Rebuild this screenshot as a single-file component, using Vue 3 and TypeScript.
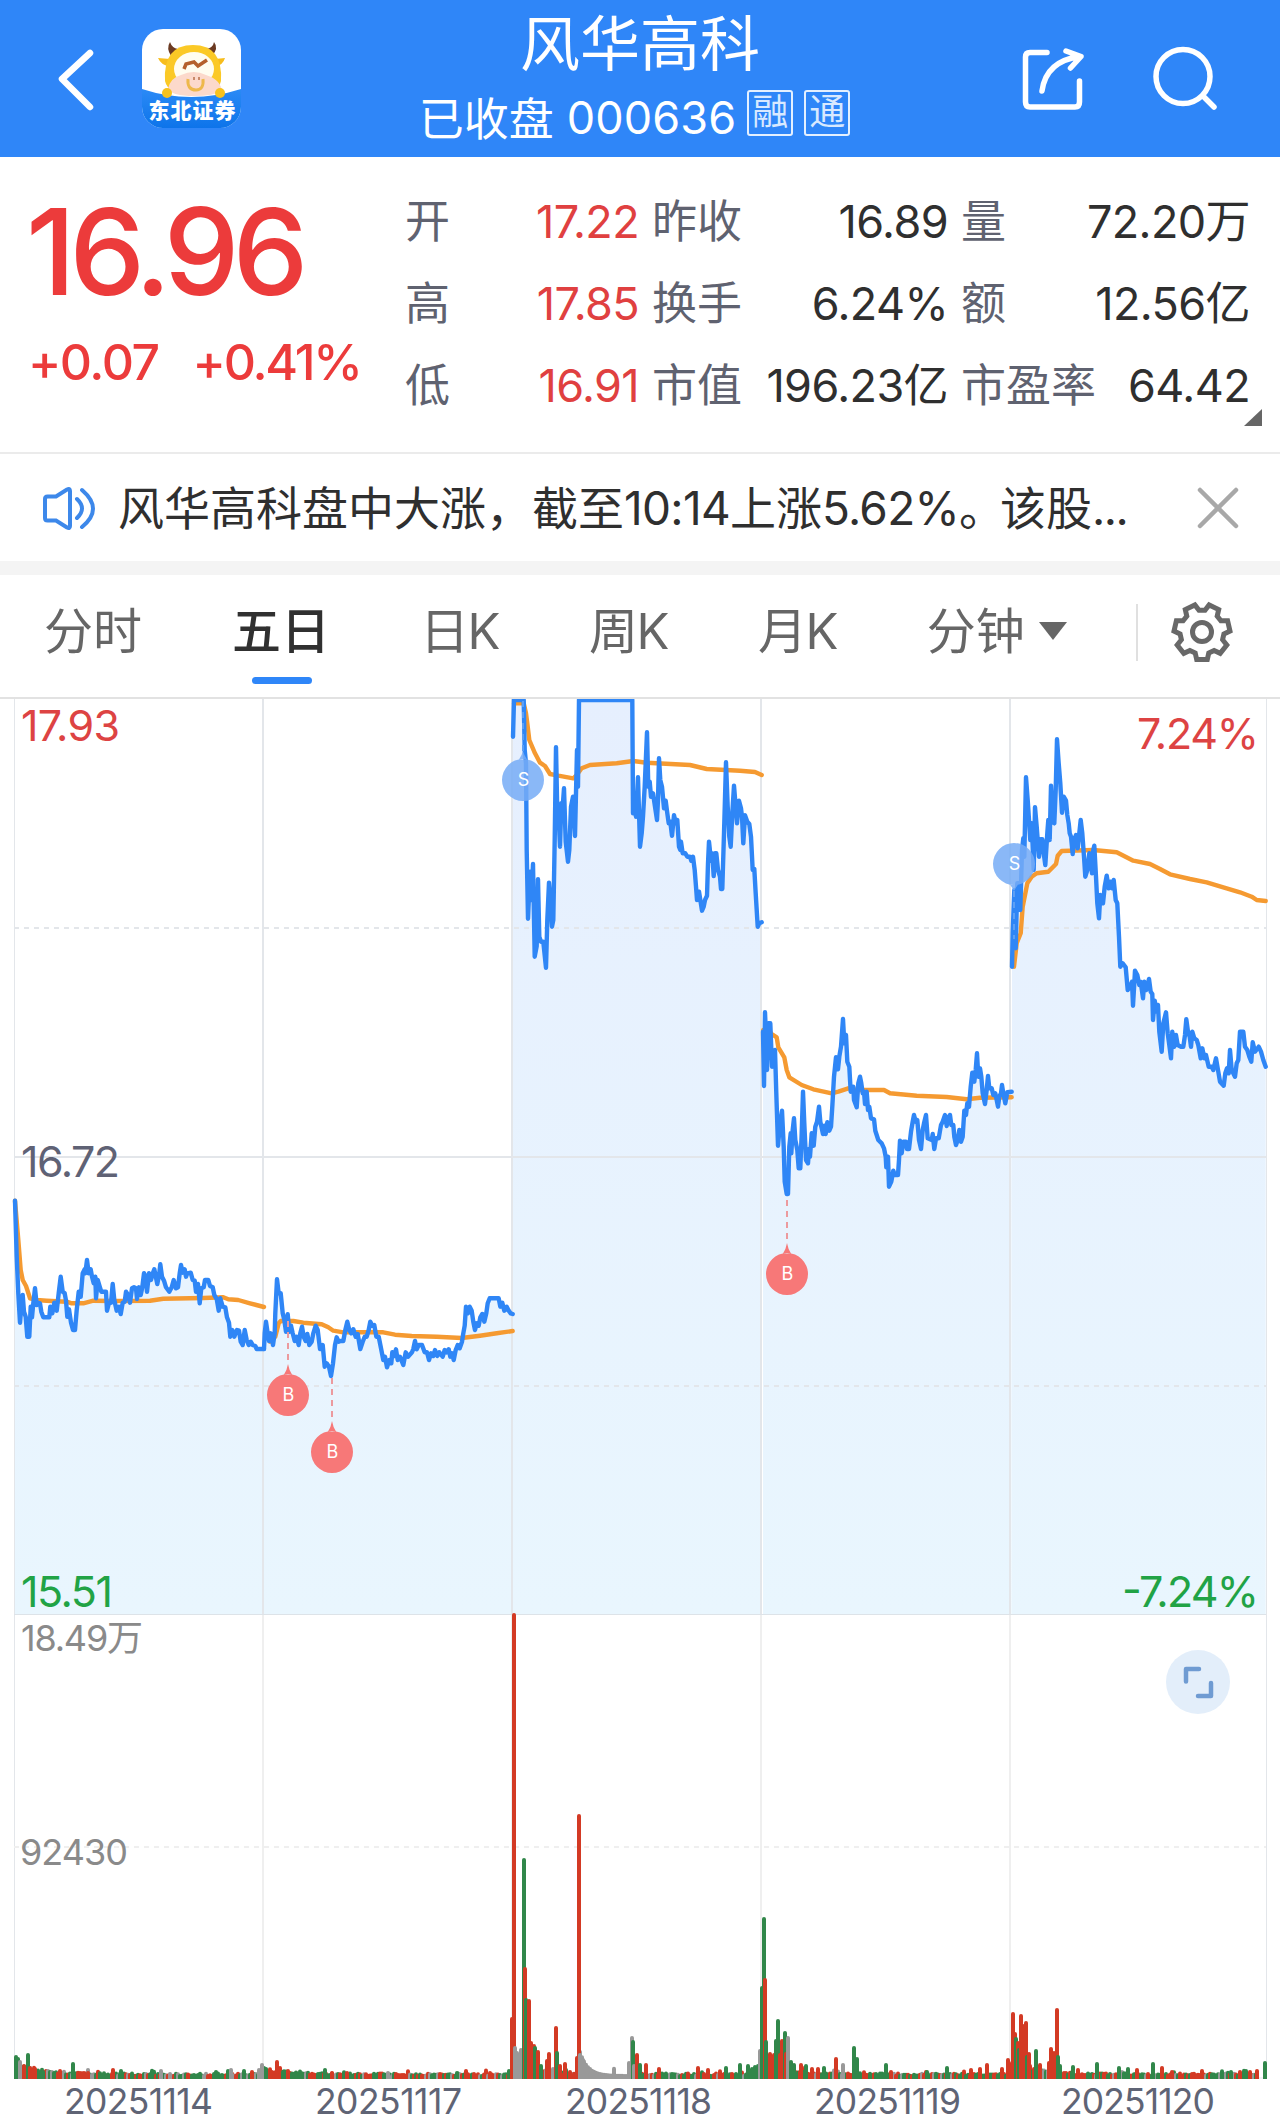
<template>
    <div class="stock_page">

        <header class="top_bar">
            <div class="top_left">
                <svg class="back" width="40" height="66" viewBox="0 0 40 66">
                    <path d="M34 7 L6 33 L34 61" />
                </svg>
                <svg class="logo" width="99" height="99" viewBox="0 0 99 99">
                    <defs>
                        <clipPath id="logoClip"><rect width="99" height="99" rx="21" /></clipPath>
                        <linearGradient id="logoBlue" x1="0" y1="0" x2="0" y2="1">
                            <stop offset="0" stop-color="#2b8af6" />
                            <stop offset="1" stop-color="#0d74ea" />
                        </linearGradient>
                    </defs>
                    <g clip-path="url(#logoClip)">
                        <rect width="99" height="99" fill="#fff" />
                        <path d="M0 60 Q49 76 99 60 V99 H0Z" fill="url(#logoBlue)" />
                        <path d="M29 27 Q24 19 28 13 Q30 19 36 20Z M70 27 Q77 19 72 13 Q71 19 64 20Z" fill="#6b3a22" />
                        <path d="M28 30 L16 29 Q19 36 27 37Z M73 30 L83 29 Q81 36 74 37Z" fill="#f7bd1c" />
                        <path d="M23 52 Q21 16 51 16 Q81 16 79 52 Q76 66 51 66 Q26 66 23 52Z" fill="#fbc926" />
                        <ellipse cx="52" cy="40" rx="20" ry="17" fill="#fffdf0" />
                        <path d="M26 60 Q28 49 39 46 Q52 40 64 46 Q78 50 80 62 Q72 67 52 67 Q30 67 26 60Z" fill="#fcd9cb" />
                        <path d="M42 40 L44 35 L52 33 L56 37 L65 31" class="trend" />
                        <path d="M46 50 Q45 61 54 61 Q62 61 61 50" class="ring" />
                        <path d="M52 48v3M57 48v3" class="nostril" />
                        <circle cx="25" cy="64" r="5" fill="#f7c21e" />
                        <circle cx="78" cy="64" r="5" fill="#f7c21e" />
                        <text x="6.500" y="89" textLength="87" class="logo_text">东北证券</text>
                    </g>
                </svg>
            </div>
            <div class="top_title">
                <h1>风华高科</h1>
                <div class="sub_title">
                    <span>已收盘</span>
                    <span class="code">000636</span>
                    <span class="tag">融</span>
                    <span class="tag second">通</span>
                </div>
            </div>
            <div class="top_right">
                <svg width="70" height="70" viewBox="1017 45 70 70" class="line_icon">
                    <path d="M1047 52.500 H1030 Q1025.500 52.500 1025.500 57 V102 Q1025.500 107 1030 107 H1075 Q1079.500 107 1079.500 102 V81" />
                    <path d="M1042 91 Q1046 61 1080 56.500 M1066 51 L1081 56.500 L1070.500 68" />
                </svg>
                <svg width="70" height="70" viewBox="1150 45 70 70" class="line_icon">
                    <circle cx="1183" cy="76.500" r="27" />
                    <path d="M1203 96 L1214 107" />
                </svg>
            </div>
        </header>

        <section class="quote">
            <div class="price_box">
                <div class="price">16.96</div>
                <div class="change">
                    <span>+0.07</span>
                    <span class="percent">+0.41%</span>
                </div>
            </div>
            <div class="stats">
                <div v-for="item in stats" :key="item.label" class="stat">
                    <span class="label">{{ item.label }}</span>
                    <span class="value" :class="{ up: item.up }">{{ item.value }}</span>
                </div>
            </div>
            <i class="corner"></i>
        </section>

        <section class="news">
            <svg width="56" height="46" viewBox="41 484 56 46" class="speaker">
                <path d="M45 498 Q45 495.500 47.500 495.500 H56 L67 488.500 Q70 487 70 490 V525 Q70 528 67 526.500 L56 519.500 H47.500 Q45 519.500 45 517Z" />
                <path d="M77 498 Q87 507.500 77 517 M82 489 Q104 508 82 526" />
            </svg>
            <p>风华高科盘中大涨，截至<span class="num">10:14</span>上涨<span class="num">5.62%</span><span class="stop">。</span>该股<span class="dots">...</span></p>
            <svg width="42" height="42" viewBox="0 0 42 42" class="close">
                <path d="M3 3 L39 39 M39 3 L3 39" />
            </svg>
        </section>

        <nav class="tabs">
            <a v-for="tab in tabs" :key="tab" :class="{ active: tab === current, k: tab.endsWith('K') }" @click="current = tab">
                {{ tab }}<i v-if="tab === '分钟'" class="caret"></i>
            </a>
            <div class="settings">
                <svg width="64" height="64" viewBox="-32 -32 64 64">
                    <path :d="gear" />
                    <circle r="9.500" />
                </svg>
            </div>
        </nav>

        <svg class="chart" width="1280" height="1425" viewBox="0 0 1280 1425">
            <defs>
                <linearGradient id="area" gradientUnits="userSpaceOnUse" x1="0" y1="0" x2="0" y2="915">
                    <stop offset="0" stop-color="#e6effe" />
                    <stop offset="1" stop-color="#e9f6fe" />
                </linearGradient>
            </defs>

            <path v-for="(s, i) in sessions" :key="'a' + i" :d="areaPath(s)" fill="url(#area)" />

            <g class="grid">
                <path d="M14.500 0V1380M1266.500 0V1380" class="thin" />
                <path d="M263 0V915M512 0V915M761 0V915M1010 0V915" />
                <path d="M263 915V1380M512 915V1380M761 915V1380M1010 915V1380" class="pale" />
                <path d="M14 458H1266" />
                <path d="M14 915.500H1266" class="thin base" />
                <path d="M14 229H1266M14 687H1266" class="dash" />
                <path d="M14 1148H1266" class="dash pale" />
                <path d="M14 1379H1266" class="thin" />
            </g>

            <polyline v-for="(s, i) in sessions" :key="'v' + i" :points="points(s, s.avg)" class="avg_line" />
            <polyline v-for="(s, i) in sessions" :key="'p' + i" :points="points(s, s.price)" class="price_line" />

            <path v-for="(b, i) in bars" :key="'b' + i" :d="`M${b.x} 1380V${1382 - b.h}`" class="bar" :class="b.c" />
            <rect x="0" y="1380" width="1280" height="4" fill="#fff" />

            <g v-for="m in markers" :key="m.x" class="marker" :class="m.type">
                <path :d="`M${m.x} ${m.from}V${m.to}`" class="guide" />
                <path :d="pinPath(m)" class="pin" />
                <text :x="m.x + .5" :y="m.y + 6">{{ m.type }}</text>
            </g>

            <text x="21" y="41.500" textLength="99" class="axis red">17.93</text>
            <text x="1137" y="50" textLength="122" class="axis red">7.24%</text>
            <text x="21" y="477.500" textLength="99" class="axis slate">16.72</text>
            <text x="21" y="908" textLength="92" class="axis green">15.51</text>
            <text x="1122" y="908" textLength="137" class="axis green">-7.24%</text>
            <text x="21" y="951.500" textLength="122" class="vol">18.49万</text>
            <text x="20" y="1166" textLength="108" class="vol">92430</text>
            <text v-for="d in dates" :key="d.text" :x="d.x" y="1415" :textLength="d.w" class="date">{{ d.text }}</text>

            <g class="expand">
                <circle cx="1198" cy="983" r="32" />
                <path d="M1186 982.500V970H1199M1198 997H1211V984" />
            </g>
        </svg>

    </div>
</template>

<script setup lang="ts">
import { ref } from 'vue';

interface Session {
    x: number;
    y: number;
    price: string;
    avg: string;
}
interface Bar {
    x: number;
    h: number;
    c: string;
}
interface Marker {
    type: 'B' | 'S';
    x: number;
    y: number;
    from: number;
    to: number;
    tip: number;
}

const tabs = ['分时', '五日', '日K', '周K', '月K', '分钟'];
const current = ref('五日');

const stats = [
    { label: '开', value: '17.22', up: true },
    { label: '昨收', value: '16.89' },
    { label: '量', value: '72.20万' },
    { label: '高', value: '17.85', up: true },
    { label: '换手', value: '6.24%' },
    { label: '额', value: '12.56亿' },
    { label: '低', value: '16.91', up: true },
    { label: '市值', value: '196.23亿' },
    { label: '市盈率', value: '64.42' },
];

const dates = [
    { text: '20251114', x: 64, w: 149 },
    { text: '20251117', x: 315, w: 147 },
    { text: '20251118', x: 565, w: 147 },
    { text: '20251119', x: 814, w: 147 },
    { text: '20251120', x: 1061, w: 154 },
];

// points are kept in thirds of a pixel, x / y is the origin of the session
const sessions: Session[] = [
    {
        x: 0, y: 481,
        price: '45,62 50,230 55,340 60,428 64,380 68,345 72,395 77,410 82,470 88,470 92,380 96,412 100,370 105,325 110,375 115,368 120,370 124,395 130,412 148,412 151,380 157,400 163,368 170,392 176,340 182,290 188,335 194,340 198,362 202,410 207,388 213,428 219,450 225,450 230,390 236,335 242,350 248,280 254,268 256,280 261,240 266,280 272,268 276,290 281,310 286,290 288,355 293,300 299,320 304,335 318,335 321,392 327,368 333,368 338,312 343,360 350,392 357,380 362,402 368,368 374,365 378,335 384,345 390,368 396,325 402,322 408,325 411,357 417,322 422,345 427,322 432,280 437,290 441,335 447,280 453,300 459,278 463,268 472,312 478,280 481,253 486,290 492,302 498,322 508,335 515,322 521,300 528,325 534,322 539,280 543,255 548,278 554,268 558,290 562,280 572,278 578,300 584,302 588,335 594,312 599,370 604,325 611,322 615,300 625,300 630,318 638,322 643,345 650,357 656,392 661,355 668,380 676,382 681,412 687,428 691,470 697,450 703,470 711,450 717,452 722,485 728,495 734,450 740,480 746,495 752,485 758,495 766,498 770,507 792,507',
        avg: '45,62 55,180 62,270 68,300 78,318 90,355 110,360 140,362 200,365 215,370 250,370 280,362 340,363 450,362 490,356 610,354 670,352 685,358 715,360 750,370 792,381',
    },
    {
        x: 0, y: 481,
        price: '792,507 794,460 798,425 803,460 807,483 812,460 819,495 824,460 826,400 831,298 836,340 842,340 848,400 853,420 858,455 863,403 868,455 873,437 878,460 884,483 890,470 896,495 901,460 906,440 911,470 917,483 922,462 928,495 935,485 940,460 947,437 953,450 960,507 968,495 974,560 980,550 987,560 993,588 999,550 1005,495 1010,472 1016,485 1022,483 1030,483 1036,450 1042,425 1048,450 1054,460 1060,448 1067,470 1073,462 1081,507 1088,485 1094,470 1100,470 1106,450 1111,425 1117,437 1123,435 1129,470 1136,470 1143,505 1150,540 1155,530 1161,562 1168,540 1174,550 1177,517 1183,528 1188,508 1193,540 1200,530 1210,555 1217,517 1224,530 1236,517 1240,507 1245,483 1250,508 1256,495 1266,495 1274,517 1281,517 1287,540 1293,520 1300,528 1305,510 1312,528 1318,517 1328,530 1334,510 1340,517 1346,508 1351,530 1356,520 1361,540 1367,510 1373,495 1379,505 1386,485 1390,460 1394,437 1398,380 1404,400 1409,380 1415,392 1420,425 1425,450 1430,430 1436,437 1441,412 1447,402 1453,425 1459,400 1463,370 1469,355 1496,355 1501,380 1507,368 1513,392 1520,380 1526,392 1532,400 1538,402',
        avg: '810,485 826,470 836,430 842,423 880,423 910,428 965,433 985,442 1000,452 1030,457 1150,457 1185,464 1235,468 1310,470 1385,474 1440,467 1490,460 1538,453',
    },
    {
        x: 490, y: -9,
        price: '69,140 72,30 101,30 104,180 108,220 110,480 114,686 120,545 124,630 129,522 134,800 140,768 144,568 148,740 153,755 160,755 168,833 172,690 177,578 182,640 186,710 190,690 194,450 198,172 202,370 206,380 210,470 214,340 218,350 222,295 227,455 234,515 238,480 243,350 249,320 255,438 261,180 264,290 267,30 427,30 429,370 434,350 438,380 444,262 450,470 455,430 459,380 464,290 471,127 475,290 479,275 483,320 489,310 495,350 501,390 504,330 507,205 511,270 516,290 522,355 527,332 532,370 536,400 541,395 546,437 552,376 557,400 562,390 567,470 571,480 573,455 578,490 586,490 592,500 600,500 604,512 609,500 614,540 618,590 621,630 627,605 636,662 641,650 645,630 651,617 654,520 657,455 663,512 667,490 671,558 675,490 679,490 684,540 690,560 693,597 697,597 702,430 708,217 713,350 718,440 722,470 727,370 732,287 737,350 741,400 747,332 753,355 756,380 760,460 765,376 772,395 778,402 783,440 788,540 793,537 797,610 803,710 808,700 815,697',
        avg: '72,40 101,40 108,70 112,100 118,150 135,190 150,218 165,228 180,252 205,257 250,265 260,255 275,235 300,225 380,220 430,213 470,218 600,225 650,237 750,242 795,246 815,255',
    },
    {
        x: 750, y: 261,
        price: '39,215 42,378 45,157 48,230 51,330 55,190 61,190 66,320 70,290 75,270 79,400 84,557 89,500 96,452 101,560 104,665 110,702 114,702 118,560 122,520 124,580 128,510 132,475 136,540 142,570 146,625 151,625 155,520 159,395 163,490 168,600 174,610 177,567 180,590 185,520 191,557 196,500 201,485 207,440 211,485 219,522 223,497 227,522 232,487 238,512 243,500 247,440 252,350 258,292 264,328 268,290 273,260 279,177 283,250 288,225 292,305 298,320 302,395 310,380 312,420 320,442 325,370 330,350 334,370 338,400 342,395 345,432 350,395 354,450 358,440 363,475 372,478 376,512 385,540 395,550 402,565 407,590 409,622 414,590 417,680 424,665 430,632 434,645 444,645 447,600 450,542 455,580 460,545 468,545 471,567 477,567 483,515 488,485 492,465 497,485 502,480 507,540 513,567 518,510 522,490 528,465 533,535 545,540 548,522 553,567 558,535 566,535 573,495 578,485 585,465 590,498 594,475 600,465 604,495 610,495 613,530 618,555 623,540 628,510 633,545 638,530 643,452 648,465 652,430 657,440 662,380 667,338 673,365 677,330 681,280 685,350 690,325 694,350 698,400 705,432 710,390 714,348 718,385 725,385 730,405 736,400 740,420 744,440 748,410 753,400 756,375 760,400 766,430 772,397 785,395',
        avg: '40,210 50,205 65,222 80,232 85,262 103,292 110,330 118,352 155,375 190,388 245,400 265,395 295,385 320,390 402,390 420,400 500,407 590,411 650,418 690,413 785,412',
    },
    {
        x: 990, y: -9,
        price: '66,830 68,730 73,600 77,775 82,580 86,580 91,660 96,480 100,445 103,500 108,262 113,330 117,390 121,450 125,400 131,540 135,352 140,410 147,500 152,448 157,448 161,490 166,525 172,430 175,390 179,450 183,287 188,395 193,400 197,300 201,148 206,220 211,280 216,368 221,320 228,332 232,375 236,400 239,430 243,440 248,492 252,450 258,435 263,475 268,430 272,390 277,430 282,500 286,560 292,540 298,490 303,520 306,550 310,480 313,467 318,560 322,640 327,685 331,615 339,640 344,590 350,557 356,595 361,575 366,595 371,570 377,630 382,640 387,740 391,830 398,820 407,832 413,900 420,890 426,875 429,947 433,880 435,842 442,855 448,885 452,875 459,925 463,875 469,900 477,867 482,905 487,912 489,990 494,932 500,965 504,945 508,1025 515,1085 520,1000 528,967 533,1030 538,1065 543,1105 547,1025 553,1070 558,1035 563,1065 573,1070 580,1070 585,1035 589,988 594,1025 599,1040 603,1070 607,1025 613,1045 620,1050 625,1065 632,1105 637,1075 643,1105 648,1095 656,1130 665,1130 670,1140 678,1105 684,1140 690,1175 701,1187 706,1150 711,1135 716,1150 720,1080 725,1140 735,1160 740,1120 745,1110 750,1025 760,1025 765,1070 772,1080 778,1100 784,1115 788,1057 795,1085 806,1070 813,1085 820,1110 827,1130',
        avg: '72,830 80,760 92,730 98,650 108,600 112,580 125,560 140,550 175,545 190,530 198,522 203,497 215,483 310,480 380,487 430,512 480,522 510,537 540,553 600,567 650,577 700,592 750,607 785,620 800,630 827,633',
    },
];

const scaled = (s: Session, list: string) => list.split(' ').map(p => {
    const [x, y] = p.split(',').map(Number);
    return [+(s.x + x / 3).toFixed(1), +(s.y + y / 3).toFixed(1)];
});
const points = (s: Session, list: string) => scaled(s, list).map(p => p.join(',')).join(' ');
const areaPath = (s: Session) => {
    const pts = scaled(s, s.price);
    return `M${pts[0][0]} 915L${pts.map(p => p.join(' ')).join('L')}V915Z`;
};

const markers: Marker[] = [
    { type: 'B', x: 288, y: 696, from: 622, to: 666, tip: 665 },
    { type: 'B', x: 332, y: 753, from: 679, to: 722, tip: 722 },
    { type: 'B', x: 787, y: 575, from: 501, to: 544, tip: 544 },
    { type: 'S', x: 523, y: 81, from: 2, to: 54, tip: 52 },
    { type: 'S', x: 1014, y: 165, from: 192, to: 240, tip: 192 },
];
const pinPath = (m: Marker) => {
    const k = m.tip < m.y ? -1 : 1;
    return `M${m.x - 21} ${m.y}a21 21 0 1 0 42 0a21 21 0 1 0 -42 0Z`
        + `M${m.x - 4} ${m.y + k * 20.5}Q${m.x - 1} ${m.y + k * 25} ${m.x} ${m.tip}Q${m.x + 1} ${m.y + k * 25} ${m.x + 4} ${m.y + k * 20.5}Z`;
};

// quiet volume between the peaks
const bars: Bar[] = [];
let seed = 7;
const rand = () => {
    seed = (seed * 16807) % 2147483647;
    return seed / 2147483647;
};
const dayStart = [15, 264, 513, 762, 1011];
const dayPeak = [17, 7, 16, 18, 20];
for (let x = 16; x < 1258; x += 2) {
    if (x > 580 && x < 632) continue;
    let day = 4;
    while (x < dayStart[day]) day--;
    const decay = Math.exp(-(x - dayStart[day]) / 24) * dayPeak[day];
    const r = rand();
    const h = 5 + rand() * 2.5 + decay * (.4 + rand() * .6) + (rand() > .95 ? 3 : 0);
    bars.push({ x, h, c: r < .43 ? 'r' : r < .86 ? 'g' : 'n' });
}
// trading halt on 11/18, all neutral
for (let x = 580; x < 632; x += 2) {
    bars.push({ x, h: 5 + 24 * Math.exp(-(x - 580) / 8) + (x === 614 ? 7 : 0), c: 'n' });
}
const peaks = '16,24,g 18,22,g 20,19,n 24,15,r 28,26,g 30,13,r 35,12,r 39,9,g 43,9,g 60,10,r 73,17,g 80,8,r 84,8,r 88,8,r 113,11,r 121,10,g 161,10,n 228,10,g 231,11,n 252,9,r 259,11,n 262,16,n 266,12,g 277,19,r 280,13,r 283,9,g 288,10,r 325,11,g 332,8,r 347,8,r 388,8,n 457,8,g 466,10,r 490,8,r 509,10,g 512,62,r 514,466,r 515,33,n 517,28,n 519,25,n 521,31,n 524,221,g 525,112,r 526,81,g 529,80,r 531,38,r 534,35,r 535,33,g 538,29,r 541,15,g 547,20,r 549,27,r 553,12,n 556,53,r 557,28,g 560,15,r 565,17,r 570,9,r 577,23,r 579,265,r 580,26,n 583,21,n 629,18,n 632,43,n 633,39,g 634,15,n 637,26,r 640,16,g 646,16,r 659,12,r 698,13,r 708,11,r 726,13,g 740,16,g 748,15,g 752,12,g 755,14,g 758,15,g 760,30,n 762,93,g 764,162,g 765,101,r 766,39,g 770,27,r 774,26,r 776,40,g 778,60,g 780,26,r 782,40,r 785,48,g 786,27,r 788,43,n 791,19,g 794,16,g 801,16,r 806,15,g 812,12,r 818,12,r 824,13,g 836,22,r 843,16,n 854,33,g 857,22,g 886,16,g 891,9,r 927,9,g 947,13,g 971,11,r 980,12,r 987,16,r 1002,12,r 1008,21,r 1013,67,r 1015,47,r 1016,42,g 1018,38,r 1019,31,g 1021,65,r 1024,55,r 1026,58,r 1027,24,g 1029,27,r 1036,30,g 1040,16,r 1049,18,r 1051,32,r 1054,28,r 1057,71,r 1058,24,g 1060,15,g 1073,14,g 1078,11,r 1097,17,g 1119,13,g 1128,12,g 1137,11,r 1153,17,g 1162,13,r 1172,9,r 1231,9,g 1240,9,r 1250,9,r 1257,10,r 1265,18,g';
peaks.split(' ').forEach(p => {
    const [x, h, c] = p.split(',');
    bars.push({ x: +x, h: +h, c });
});

// seven teeth, one pointing straight down
const gearPoints: string[] = [];
for (let i = 0; i < 7; i++) {
    const mid = 90 + i * 360 / 7;
    [[-18, 22], [-11, 28], [11, 28], [18, 22]].forEach(([a, r]) => {
        const t = (mid + a) * Math.PI / 180;
        gearPoints.push(`${(Math.cos(t) * r).toFixed(1)} ${(Math.sin(t) * r).toFixed(1)}`);
    });
}
const gear = `M${gearPoints.join('L')}Z`;
</script>

<style>
body {
    margin: 0;
    background-color: #fff;
}
</style>

<style scoped>
.stock_page {
    width: 1280px;
    height: 2124px;
    overflow: hidden;
    background-color: #fff;
    font-family: Inter, 'Noto Sans CJK SC', sans-serif;
    color: #2f2f2f;
}
svg {
    display: block;
    flex: none;
}
.top_bar {
    display: grid;
    grid-template-columns: 340px 1fr 340px;
    height: 157px;
    background-color: #2f86f8;
    color: #fff;
}
.top_left {
    display: flex;
    align-items: center;
    padding-left: 56px;
}
.back path {
    fill: none;
    stroke: #fff;
    stroke-width: 6.5;
    stroke-linecap: round;
    stroke-linejoin: round;
}
.logo {
    margin-left: 46px;
}
.trend {
    fill: none;
    stroke: #b5602c;
    stroke-width: 3.5;
}
.ring {
    fill: none;
    stroke: #eeb84b;
    stroke-width: 3;
}
.nostril {
    stroke: #c98a6a;
    stroke-width: 2;
}
.logo_text {
    fill: #fff;
    font-size: 21px;
    font-weight: 900;
}
.top_title {
    display: flex;
    flex-direction: column;
    align-items: center;
}
h1 {
    margin: 8px 0 0;
    font-size: 60px;
    font-weight: 400;
    line-height: 72px;
}
.sub_title {
    display: flex;
    align-items: center;
    height: 72px;
    margin-right: 11px;
    font-size: 45px;
    white-space: nowrap;
}
.code {
    margin: 3px 11px 0 13px;
    letter-spacing: .1px;
}
.tag {
    box-sizing: border-box;
    width: 46px;
    height: 46px;
    margin-top: -6px;
    border: 2px solid #e4f0ff;
    border-radius: 3px;
    color: #d8e9ff;
    font-size: 36px;
    line-height: 41px;
    text-align: center;
}
.tag.second {
    margin-left: 11px;
}
.top_right {
    display: flex;
    gap: 63px;
    padding: 45px 0 0 77px;
}
.line_icon {
    fill: none;
    stroke: #fff;
    stroke-width: 5.5;
    stroke-linecap: round;
    stroke-linejoin: round;
}
.quote {
    position: relative;
    display: flex;
    box-sizing: border-box;
    height: 297px;
    border-bottom: 2px solid #ebebeb;
}
.price_box {
    width: 406px;
    color: #ec3b3b;
    font-weight: 500;
    white-space: nowrap;
}
.price {
    padding: 35px 0 0 26px;
    font-size: 120px;
    line-height: 120px;
    letter-spacing: -6.4px;
}
.change {
    display: flex;
    padding: 20px 0 0 28px;
    font-size: 50px;
    line-height: 60px;
    letter-spacing: -1.5px;
}
.percent {
    margin-left: 34px;
    letter-spacing: -2.2px;
}
.stats {
    display: grid;
    grid-template-columns: 247px 309px 289px;
    grid-template-rows: repeat(3, 82px);
    margin-left: -1px;
    padding-top: 24px;
}
.stat {
    display: flex;
    align-items: center;
    justify-content: space-between;
    padding-right: 13px;
    font-size: 45px;
    line-height: 60px;
    white-space: nowrap;
}
.stat:nth-child(3n) {
    padding-right: 0;
}
.label {
    color: #5f6270;
}
.value {
    letter-spacing: -.6px;
}
.up {
    color: #e04040;
}
.corner {
    position: absolute;
    right: 18px;
    bottom: 26px;
    border-left: 18px solid transparent;
    border-bottom: 17px solid #666;
}
.news {
    display: flex;
    align-items: center;
    box-sizing: border-box;
    height: 121px;
    padding-left: 41px;
    border-bottom: 14px solid #f4f4f4;
}
.news p {
    width: 1013px;
    margin: 0 0 0 21px;
    font-size: 46px;
    line-height: 60px;
    white-space: nowrap;
}
.num {
    letter-spacing: -.7px;
}
.stop {
    margin-right: -5px;
}
.dots {
    letter-spacing: -1.5px;
}
.speaker {
    fill: none;
    stroke: #3d88ea;
    stroke-width: 4;
    stroke-linecap: round;
}
.close {
    margin-left: 66px;
    stroke: #a8a8a8;
    stroke-width: 4.5;
    stroke-linecap: round;
}
.tabs {
    display: flex;
    align-items: center;
    gap: 90px;
    box-sizing: border-box;
    height: 124px;
    padding: 0 0 8px 44px;
    border-bottom: 2px solid #e2e2e2;
    font-size: 49px;
    line-height: 60px;
    color: #666;
}
.tabs a {
    position: relative;
    display: flex;
    align-items: center;
    white-space: nowrap;
}
.tabs .k {
    letter-spacing: -1.5px;
}
.tabs .active {
    color: #303030;
    font-weight: 500;
}
.active::after {
    content: '';
    position: absolute;
    left: 20px;
    bottom: -22px;
    width: 60px;
    height: 7px;
    border-radius: 4px;
    background-color: #2f86f8;
}
.caret {
    margin: -2px 0 0 14px;
    border: 14px solid transparent;
    border-top: 18px solid #666;
    border-bottom: 0;
}
.settings {
    display: flex;
    align-items: center;
    height: 57px;
    margin-left: -21px;
    padding-left: 32px;
    border-left: 2px solid #e0e0e0;
}
.settings svg {
    fill: none;
    stroke: #686868;
    stroke-width: 5;
}
.grid {
    fill: none;
    stroke: #e3e6ea;
    stroke-width: 2;
}
.thin {
    stroke-width: 1;
}
.base {
    stroke: #dde3e8;
}
.pale {
    stroke: #efefef;
}
.dash {
    stroke-dasharray: 5 5;
}
.avg_line, .price_line {
    fill: none;
    stroke: #f59a31;
    stroke-width: 4.4;
    stroke-linecap: round;
    stroke-linejoin: round;
}
.price_line {
    stroke: #2f86f6;
}
.bar {
    stroke-width: 4;
    stroke-linecap: round;
}
.r {
    stroke: #d33a24;
}
.g {
    stroke: #31874a;
}
.n {
    stroke: #999;
}
.marker text {
    fill: #fff;
    font-size: 18px;
    text-anchor: middle;
}
.guide {
    stroke: #ec9a9e;
    stroke-width: 2;
    stroke-dasharray: 6 5;
}
.S .guide {
    stroke: #5c9ff5;
}
.B .pin {
    fill: #f77878;
}
.S .pin {
    fill: #75acf6;
    fill-opacity: .85;
}
.axis {
    font-size: 43px;
}
.red {
    fill: #dd4343;
}
.green {
    fill: #21a345;
}
.slate {
    fill: #5f6275;
}
.vol {
    fill: #8a8a8a;
    font-size: 36px;
}
.date {
    fill: #5f6475;
    font-size: 35.5px;
}
.expand circle {
    fill: #e3eefa;
}
.expand path {
    fill: none;
    stroke: #6f9bd2;
    stroke-width: 4.5;
    stroke-linecap: round;
    stroke-linejoin: round;
}
</style>
